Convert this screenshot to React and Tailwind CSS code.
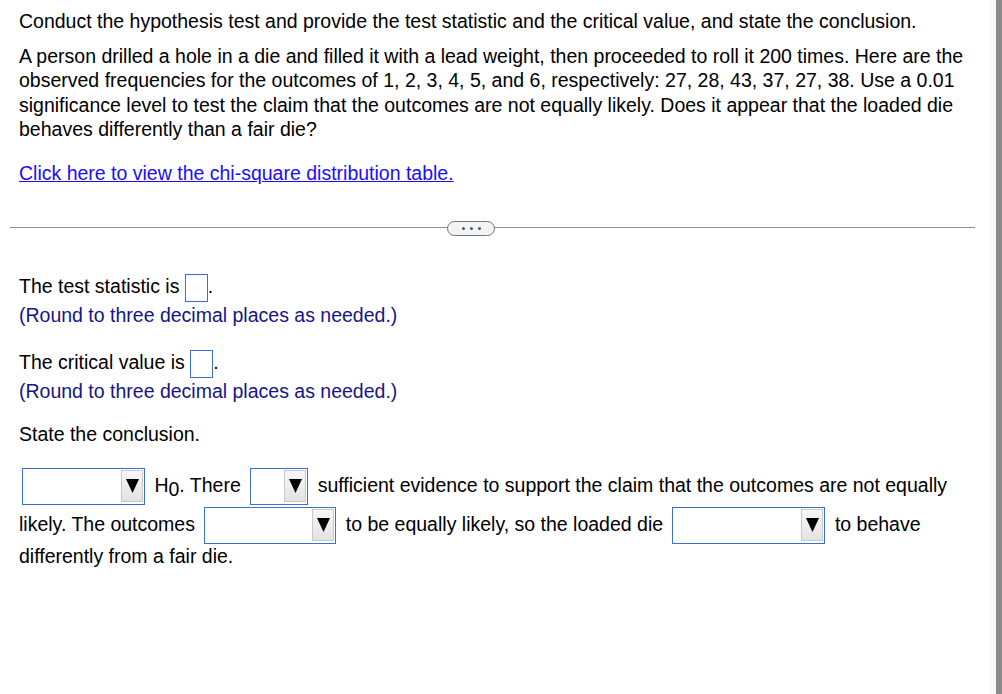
import React from "react";

const Box = ({ w }) => (
  <span
    className={`inline-block align-middle border border-[#3a6fd8] bg-white h-[28px] ${w}`}
  />
);

const Drop = ({ w }) => (
  <span
    className={`inline-flex align-middle justify-end items-center border border-[#3a6fd8] bg-white h-[37px] my-[1px] mr-[4px] p-[1px] ${w}`}
  >
    <span className="flex items-center justify-center w-[22px] h-[32px] border border-[#c8c8c8] bg-gradient-to-b from-[#f7f7f7] to-[#e3e3e3]">
      <svg width="13" height="14" viewBox="0 0 13 14">
        <polygon points="0,0 13,0 6.5,14" fill="#000" />
      </svg>
    </span>
  </span>
);

export default function App() {
  return (
    <div
      className="flex h-screen w-full bg-white text-black text-[19.5px] leading-[24.5px]"
      style={{ fontFamily: '"Liberation Sans", Arial, sans-serif' }}
    >
      <div className="flex-1 min-w-0 flex flex-col">
        <div className="pl-[19px] pr-[20px] pt-[9px]">
          <p>
            Conduct the hypothesis test and provide the test statistic and the
            critical value, and state the conclusion.
          </p>
          <p className="mt-[10px]">
            A person drilled a hole in a die and filled it with a lead weight,
            then proceeded to roll it 200 times. Here are the observed
            frequencies for the outcomes of 1, 2, 3, 4, 5, and 6, respectively:
            27, 28, 43, 37, 27, 38. Use a 0.01 significance level to test the
            claim that the outcomes are not equally likely. Does it appear that
            the loaded die behaves differently than a fair die?
          </p>
          <p className="mt-[19px]">
            <a href="#" className="text-[#1a0dff] underline">
              Click here to view the chi-square distribution table.
            </a>
          </p>
        </div>

        <div className="relative mt-[42px] ml-[10px] w-[965px] h-[1px] bg-[#8a9199]">
          <span className="absolute left-[437px] top-[-6px] flex items-center justify-center gap-[5px] w-[48px] h-[15px] rounded-full border border-[#6e7781] bg-[#f3f4f6]">
            <span className="w-[3px] h-[3px] rounded-full bg-[#4b5563]" />
            <span className="w-[3px] h-[3px] rounded-full bg-[#4b5563]" />
            <span className="w-[3px] h-[3px] rounded-full bg-[#4b5563]" />
          </span>
        </div>

        <div className="pl-[19px] pr-[20px] mt-[46px]">
          <p>
            The test statistic is <Box w="w-[23px]" />.
          </p>
          <p className="text-[#15158a] mt-[1px]">
            (Round to three decimal places as needed.)
          </p>
          <p className="mt-[22px]">
            The critical value is <Box w="w-[23px]" />.
          </p>
          <p className="text-[#15158a] mt-[1px]">
            (Round to three decimal places as needed.)
          </p>
          <p className="mt-[19px]">State the conclusion.</p>

          <div className="mt-[20px] w-[945px] leading-[22px]">
            <Drop w="w-[123px] ml-[3px]" /> H
            <span className="inline-block relative top-[5px] leading-none">0</span>. There{" "}
            <Drop w="w-[58px] ml-[4px]" /> sufficient evidence to support the
            claim that the outcomes are not equally likely. The outcomes{" "}
            <Drop w="w-[132px] ml-[4px]" /> to be equally likely, so the loaded
            die <Drop w="w-[153px] ml-[4px]" /> to behave differently from a
            fair die.
          </div>
        </div>
      </div>
      <div className="w-[6px] shrink-0 bg-[#f9f9f9]" />
      <div className="w-[6px] shrink-0 bg-[#8c8c8c]" />
    </div>
  );
}
